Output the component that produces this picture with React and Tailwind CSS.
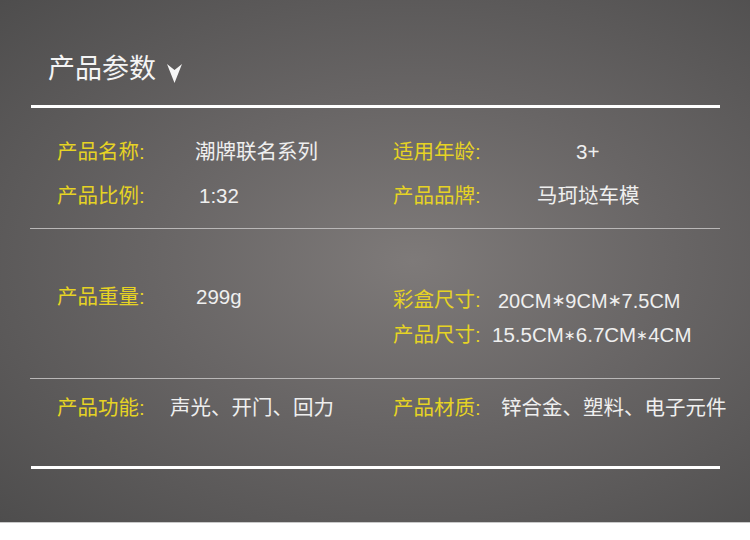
const font = "font-['Liberation_Sans','Noto_Sans_CJK_SC',sans-serif]";

function Spec({ label, value, labelW, valueSize = "text-[20.5px]" }) {
  return (
    <div className="flex h-full items-center whitespace-nowrap">
      <span className={`${labelW} shrink-0 text-[20.5px] leading-none text-[#e6d324]`}>{label}</span>
      <span className={`${valueSize} leading-none text-[#efefef]`}>{value}</span>
    </div>
  );
}

function Star({ narrow }) {
  return (
    <span
      className={`inline-block ${narrow ? "w-[12px] text-[14px]" : "w-[14px] text-[17px]"} -translate-y-[2px] text-center font-['DejaVu_Sans',sans-serif] leading-none`}
    >
      ∗
    </span>
  );
}

function Dims({ parts, narrow }) {
  return (
    <>
      {parts.map((p, i) => (
        <span key={i}>
          {i > 0 && <Star narrow={narrow} />}
          {p}
        </span>
      ))}
    </>
  );
}

function Arrow() {
  return (
    <svg width="15" height="19" viewBox="0 0 15 19" className="ml-[11px] shrink-0">
      <path d="M0 0 L7.5 6 L15 0 L7.5 19 Z" fill="#f6f6f6" />
    </svg>
  );
}

export default function App() {
  return (
    <div className={`flex h-[540px] w-[750px] flex-col ${font}`}>
      <div className="flex h-[522px] flex-col bg-[radial-gradient(ellipse_at_55%_50%,#7e7a79_0%,#686565_45%,#4e4d4d_100%)] pl-[31px]">
        <div className="flex h-[105px] w-[689px] items-end pb-[22px] pl-[17px]">
          <span className="text-[27px] leading-none text-[#f4f4f4]">产品参数</span>
          <Arrow />
        </div>
        <div className="h-[3px] w-[689px] bg-white" />

        <div className="grid h-[120px] w-[689px] grid-cols-[362px_1fr] pt-[22px]">
          <div className="flex flex-col pl-[26px]">
            <div className="h-[44px]">
              <Spec label="产品名称:" value="潮牌联名系列" labelW="w-[138px]" />
            </div>
            <div className="h-[44px]">
              <Spec label="产品比例:" value="1:32" labelW="w-[142px]" />
            </div>
          </div>
          <div className="flex flex-col">
            <div className="h-[44px]">
              <Spec label="适用年龄:" value="3+" labelW="w-[183px]" />
            </div>
            <div className="h-[44px]">
              <Spec label="产品品牌:" value="马珂垯车模" labelW="w-[144px]" />
            </div>
          </div>
        </div>
        <div className="ml-[-1px] h-px w-[690px] bg-[#b9b7b7]" />

        <div className="grid h-[149px] w-[689px] grid-cols-[362px_1fr]">
          <div className="flex flex-col pl-[26px] pt-[51px]">
            <div className="h-[35px]">
              <Spec label="产品重量:" value="299g" labelW="w-[139px]" />
            </div>
          </div>
          <div className="flex flex-col pt-[54px]">
            <div className="h-[35px]">
              <Spec
                label="彩盒尺寸:"
                value={<Dims parts={["20CM", "9CM", "7.5CM"]} />}
                labelW="w-[105px]"
                valueSize="text-[20px]"
              />
            </div>
            <div className="h-[35px]">
              <Spec
                label="产品尺寸:"
                value={<Dims parts={["15.5CM", "6.7CM", "4CM"]} narrow />}
                labelW="w-[99px]"
                valueSize="text-[20.5px]"
              />
            </div>
          </div>
        </div>
        <div className="ml-[-1px] h-px w-[690px] bg-[#b9b7b7]" />

        <div className="grid h-[87px] w-[689px] grid-cols-[362px_1fr] pt-[9px]">
          <div className="h-[40px] pl-[26px]">
            <Spec label="产品功能:" value="声光、开门、回力" labelW="w-[113px]" />
          </div>
          <div className="h-[40px]">
            <Spec label="产品材质:" value="锌合金、塑料、电子元件" labelW="w-[108px]" />
          </div>
        </div>
        <div className="h-[3px] w-[689px] bg-white" />
      </div>
      <div className="h-[18px] border-t border-[#c9c9c9] bg-white" />
    </div>
  );
}
